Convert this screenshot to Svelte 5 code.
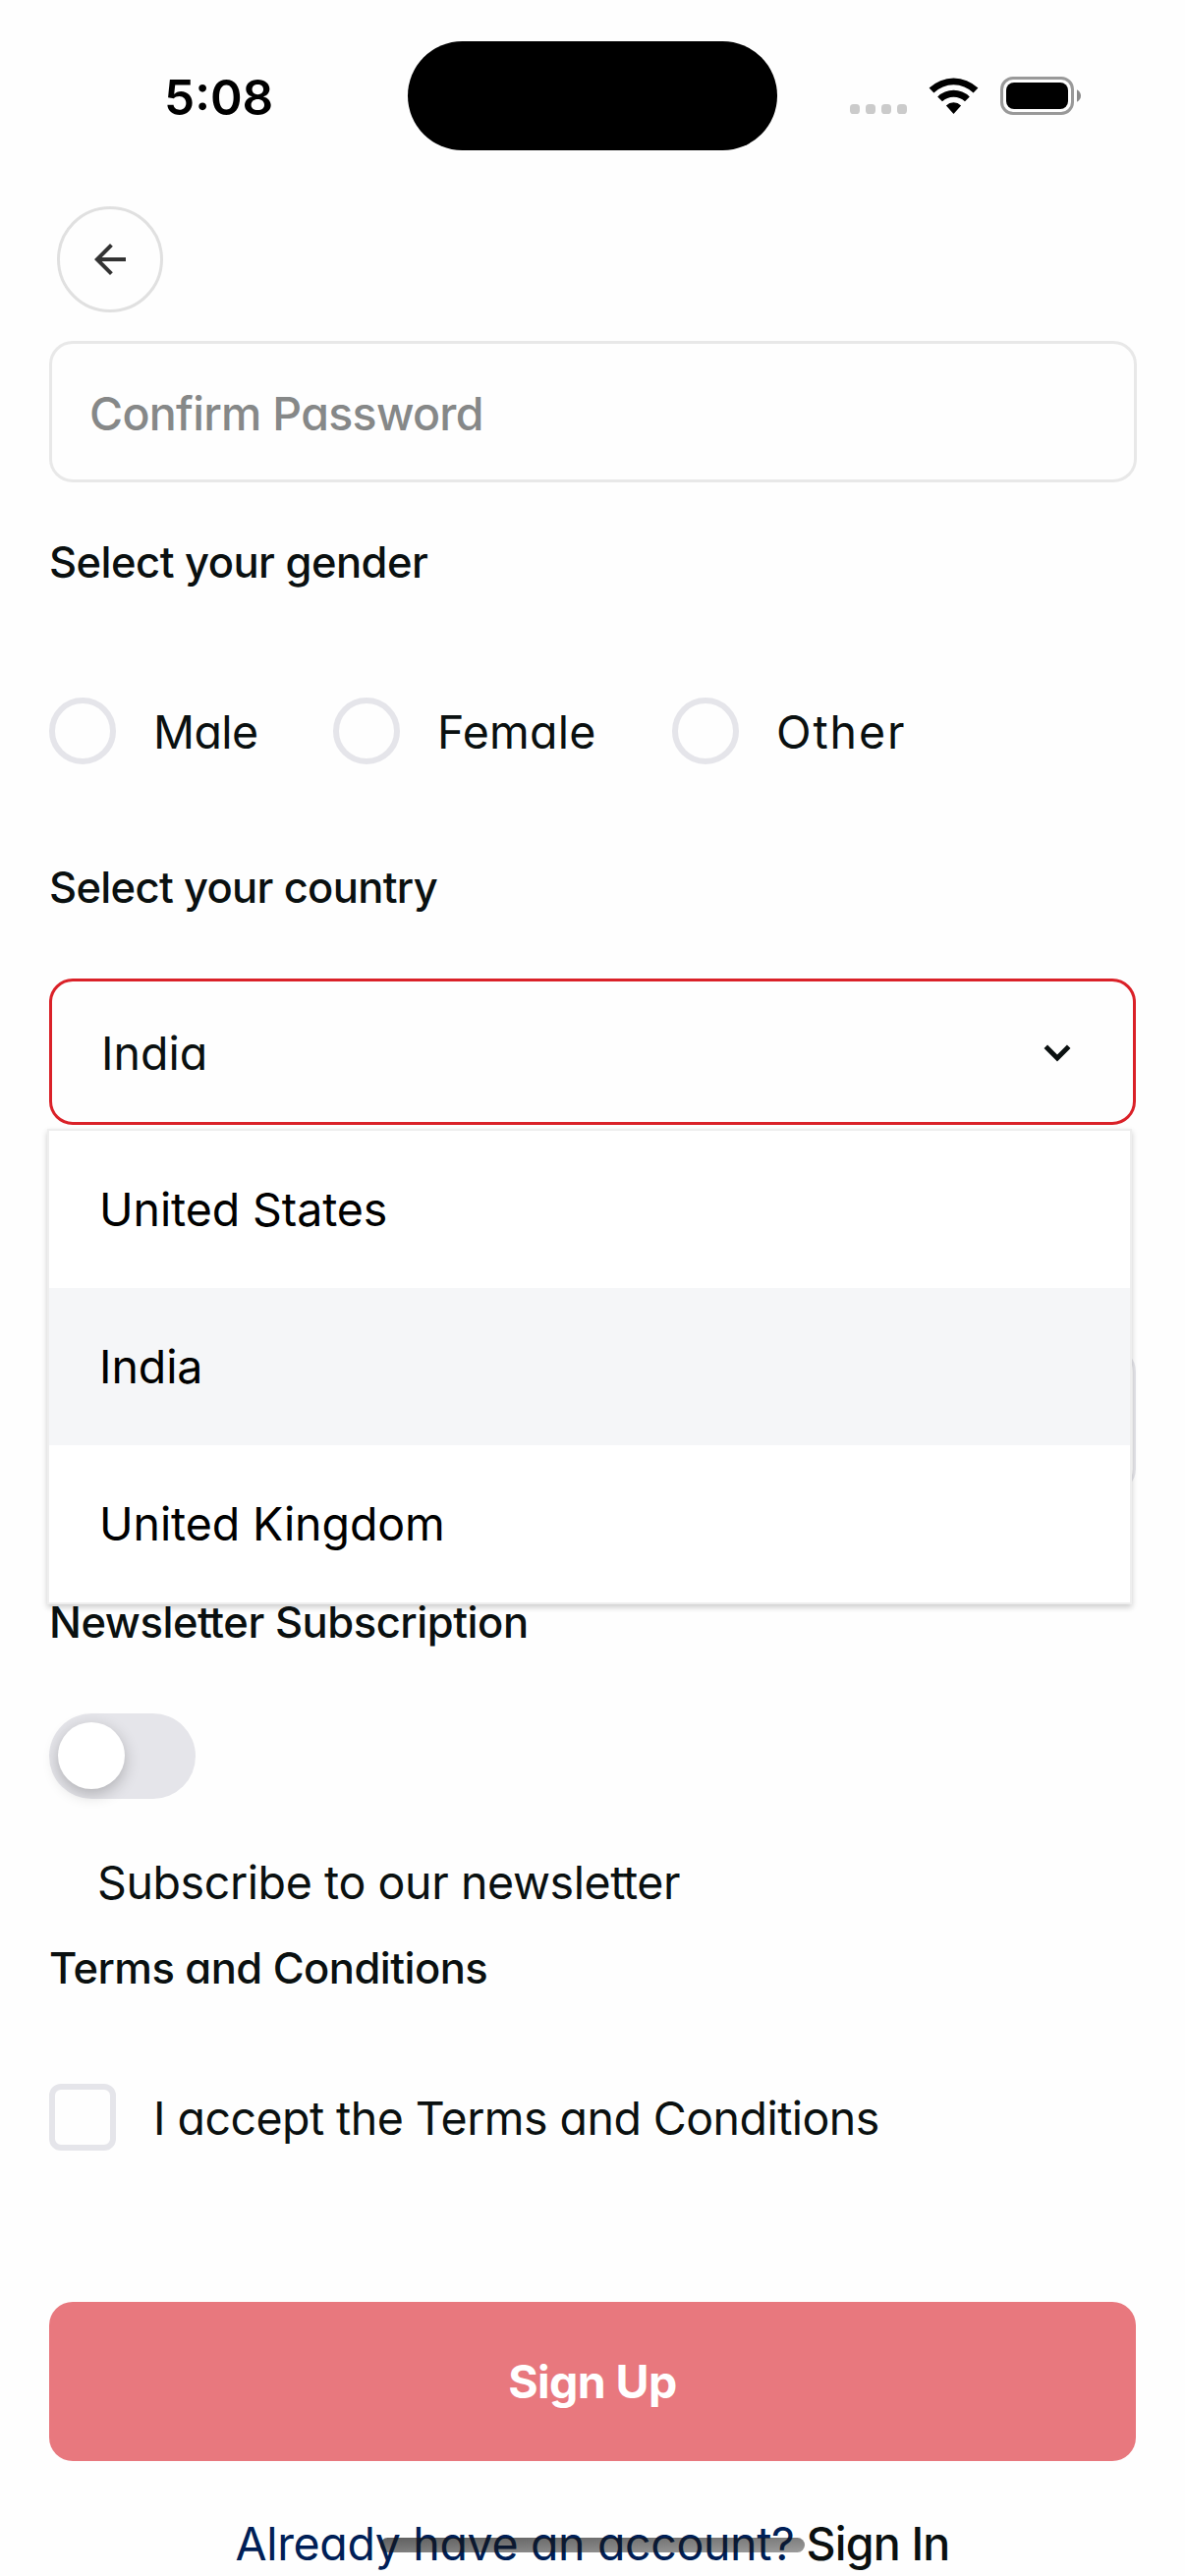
<script>
  const genders = ['Male', 'Female', 'Other'];
  const countries = ['United States', 'India', 'United Kingdom'];
  const country = 'India';
</script>

<main>
  <header class="status">
    <div class="time">5:08</div>
    <div class="island"></div>
    <div class="icons">
      <svg class="dots" width="58" height="39" viewBox="0 0 58 39" fill="#cbcbcb">
        {#each [0, 16, 32, 48] as x}<rect {x} y="28" width="10" height="10" rx="3.6" />{/each}
      </svg>
      <svg class="wifi" width="51" height="39" viewBox="0 0 51 39">
        <path d="M0.6 11.6A36 36 0 0 1 50.4 11.6L45.6 16.4A29 29 0 0 0 5.4 16.4ZM9.2 20.4A23.6 23.6 0 0 1 41.8 20.4L37 25.3A16.6 16.6 0 0 0 14 25.3ZM17.9 29.4A11 11 0 0 1 33.1 29.4L25.5 38Z" />
      </svg>
      <svg class="battery" width="83" height="39" viewBox="0 0 83 39">
        <rect x="1.5" y="1.5" width="72" height="36" rx="11.5" fill="none" stroke="#999" stroke-width="3" />
        <rect x="6" y="6" width="63" height="27" rx="8" />
        <path d="M78 13.2Q82 15.5 82 19.5T78 25.8Z" fill="#8a8a8a" />
      </svg>
    </div>
  </header>

  <button class="back" aria-label="Back">
    <svg width="48" height="48" viewBox="0 0 24 24" fill="#333"><path d="M20 11H7.83l5.59-5.59L12 4l-8 8 8 8 1.41-1.41L7.83 13H20z" /></svg>
  </button>

  <form class="form">
    <div class="field">Confirm Password</div>
    <h2 class="gender-title">Select your gender</h2>
    <div class="radios">
      {#each genders as g}
        <label class="choice"><i class="radio"></i><span class={g.toLowerCase()}>{g}</span></label>
      {/each}
    </div>
    <h2 class="country-title">Select your country</h2>
    <div class="select">
      <span class="value">{country}</span>
      <svg width="28" height="18" viewBox="0 0 28 18"><path d="M2.3 2.3L14 14L25.7 2.3" fill="none" stroke="#0a1010" stroke-width="5" /></svg>
      <ul class="menu">
        {#each countries as c}<li class:active={c === country}>{c}</li>{/each}
      </ul>
    </div>
    <div class="covered"></div>
    <h2 class="news-title">Newsle<span class="joined">t</span>ter Subscription</h2>
    <div class="toggle"><i></i></div>
    <p class="subscribe">Subscribe to our newsle<span class="joined">t</span>ter</p>
    <h2 class="terms-title">Terms and Conditions</h2>
    <label class="choice terms"><i class="check"></i><span>I accept the Terms and Conditions</span></label>
    <button type="button" class="submit">Sign Up</button>
    <p class="footer"><span class="ask">Already have an account?</span><span class="link">Sign In</span></p>
  </form>
  <div class="home"></div>
</main>

<style>
  :global(body) { background: #fefefe; }
  main { position: relative; width: 1206px; height: 2622px; overflow: hidden; font: 400 46.5px/60px Inter, 'Liberation Sans', sans-serif; font-feature-settings: 'cv11'; color: #0a1010; }
  h2, p, ul { margin: 0; padding: 0; list-style: none; white-space: nowrap; }
  span { white-space: nowrap; }
  button { font: inherit; font-feature-settings: inherit; padding: 0; }
  .status { display: grid; grid-template-columns: 415px 376px 1fr; align-items: center; padding-top: 42px; height: 110px; }
  .time { padding: 2px 0 0 167px; font-size: 49.5px; font-weight: 600; color: #000; }
  .island { height: 111px; border-radius: 56px; background: #000; }
  .icons { display: flex; padding: 0 0 1px 74px; }
  .wifi { margin-left: 22px; }
  .battery { margin-left: 22px; }
  .back { display: flex; align-items: center; justify-content: center; box-sizing: border-box; width: 108px; height: 108px; margin: 58px 0 0 58px; border: 3px solid #e0e0e0; border-radius: 50%; background: none; }
  .form { display: flex; flex-direction: column; padding: 29px 50px 0; }
  .field { display: flex; align-items: center; box-sizing: border-box; height: 144px; margin-right: -1px; padding: 4px 0 0 38px; border: 3px solid #e8e8e8; border-radius: 24px; color: #868888; font-weight: 540; letter-spacing: -0.7px; }
  h2 { font-size: 43.5px; font-weight: 550; line-height: 60px; }
  .gender-title { margin-top: 51px; letter-spacing: -0.52px; }
  .radios { display: grid; grid-template-columns: 289px 345px auto; margin-top: 108px; }
  .choice { display: flex; align-items: center; height: 68px; }
  .choice span { padding-top: 2px; }
  .radio, .check { box-sizing: border-box; width: 68px; height: 68px; border: 6px solid #e5e5ea; border-radius: 50%; margin-right: 38px; }
  .check { border-radius: 12px; }
  .male { letter-spacing: -0.6px; }
  .female { letter-spacing: 0.2px; }
  .other { letter-spacing: 1.9px; }
  .country-title { margin-top: 95px; letter-spacing: -0.67px; }
  .select { position: relative; display: flex; align-items: center; justify-content: space-between; box-sizing: border-box; height: 149px; margin-top: 63px; padding: 0 63px 0 50px; border: 3px solid #da2128; border-radius: 24px; }
  .value { padding-top: 2px; }
  .select svg { margin-top: 2px; }
  .menu { position: absolute; z-index: 2; left: -5px; top: 150px; width: 1100px; border: 2px solid #eee; background: #fff; color: #000; font-feature-settings: normal; letter-spacing: -0.1px; box-shadow: 0 3px 6px rgba(0,0,0,.2); }
  .menu li { display: flex; align-items: center; height: 160px; padding-left: 51px; }
  .menu .active { background: #f5f6f8; }
  .covered { box-sizing: border-box; height: 147px; margin-top: 227px; border: 3px solid #e5e5ea; border-radius: 24px; }
  .news-title { margin-top: 102px; letter-spacing: -0.45px; }
  .joined { letter-spacing: -2.5px; }
  .toggle { box-sizing: border-box; width: 149px; height: 87px; margin-top: 63px; padding: 9px; border-radius: 44px; background: #e5e5ea; }
  .toggle i { display: block; width: 68px; height: 68px; border-radius: 50%; background: #fff; box-shadow: 0 5px 16px rgba(0,0,0,.24); }
  .subscribe { margin: 55px 0 0 49px; letter-spacing: -0.4px; }
  .terms-title { margin-top: 27px; letter-spacing: -0.54px; }
  .terms { margin-top: 88px; letter-spacing: -0.55px; }
  .submit { height: 162px; margin-top: 154px; border: 0; border-radius: 24px; background: #e8787e; color: #fff; font-weight: 650; letter-spacing: -0.6px; }
  .footer { display: flex; justify-content: center; margin-top: 54px; gap: 12px; }
  .ask { color: #001f57; letter-spacing: -0.35px; }
  .link { font-weight: 500; letter-spacing: -0.8px; }
  .home { position: absolute; left: 387px; top: 2583px; width: 432px; height: 15px; border-radius: 8px; background: linear-gradient(178deg, rgba(20,20,20,.68), rgba(20,20,20,.42)); }
</style>
